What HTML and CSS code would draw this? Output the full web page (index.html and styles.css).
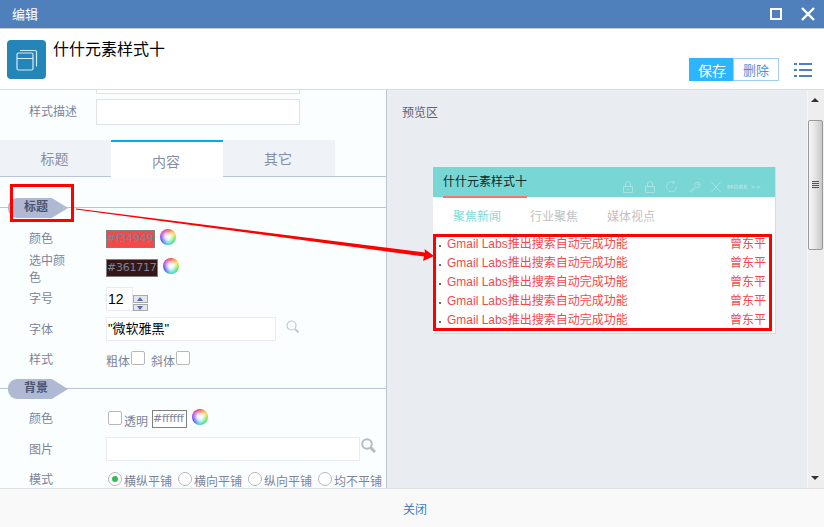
FILE: index.html
```html
<!DOCTYPE html>
<html lang="zh-CN">

<head>
	<meta charset="UTF-8">
	<title>编辑</title>
	<link rel="stylesheet" href="styles.css">
</head>

<body>
	<div class="titlebar">
		<span class="titlebar-text">编辑</span>
		<span class="win-max"></span>
		<svg class="win-close" width="14" height="14" viewBox="0 0 14 14"><path d="M1 1L13 13M13 1L1 13" stroke="#fff" stroke-width="2.4" fill="none"/></svg>
	</div>

	<div class="head">
		<div class="app-icon">
			<svg width="39" height="39" viewBox="0 0 39 39" fill="none" stroke="#d5ebf5" stroke-width="1.2">
				<rect x="10" y="13" width="16" height="17" rx="1.500"/>
				<path d="M10 18.500H26M13 10.500H28a1.500 1.500 0 0 1 1.500 1.500V26.500"/>
			</svg>
		</div>
		<div class="head-title">什什元素样式十</div>
		<div class="head-btns">
			<span class="btn-save">保存</span><span class="btn-del">删除</span>
		</div>
		<svg class="menu-icon" width="18" height="14" viewBox="0 0 18 14" fill="#4f80bb">
			<rect x="0" y="0" width="3" height="2"/><rect x="5" y="0" width="13" height="2"/>
			<rect x="0" y="6" width="3" height="2"/><rect x="5" y="6" width="13" height="2"/>
			<rect x="0" y="12" width="3" height="2"/><rect x="5" y="12" width="13" height="2"/>
		</svg>
	</div>

	<div class="main">
		<div class="left">
			<div class="cut-input"></div>
			<div class="row row-desc">
				<span class="label">样式描述</span>
				<span class="field field-desc"></span>
			</div>

			<div class="tabs">
				<span class="tab">标题</span>
				<span class="tab tab-on">内容</span>
				<span class="tab">其它</span>
			</div>

			<div class="section section-first"><span class="pill">标题</span></div>

			<div class="row row-color">
				<span class="label">颜色</span>
				<span class="swatch swatch-red">#f34949</span>
				<span class="ball"></span>
			</div>
			<div class="row row-color2">
				<span class="label label-wrap">选中颜色</span>
				<span class="swatch swatch-dark">#361717</span>
				<span class="ball"></span>
			</div>
			<div class="row row-size">
				<span class="label">字号</span>
				<span class="field field-size">12</span>
				<span class="spin"><i class="spin-up"></i><i class="spin-down"></i></span>
			</div>
			<div class="row row-font">
				<span class="label">字体</span>
				<span class="field field-font">"微软雅黑"</span>
				<svg class="mag" width="13" height="13" viewBox="0 0 13 13" fill="none" stroke="#c4c8cc"><circle cx="5.500" cy="5.500" r="4.500" stroke-width="1.200"/><path d="M9 9L12.500 12.500" stroke-width="2"/></svg>
			</div>
			<div class="row row-style">
				<span class="label">样式</span>
				<span class="opt">粗体</span><span class="check"></span>
				<span class="opt opt-gap">斜体</span><span class="check"></span>
			</div>

			<div class="section section-bg"><span class="pill">背景</span></div>

			<div class="row row-bg">
				<span class="label">颜色</span>
				<span class="check check-first"></span>
				<span class="opt opt-clear">透明</span>
				<span class="swatch swatch-white">#ffffff</span>
				<span class="ball"></span>
			</div>
			<div class="row row-pic">
				<span class="label">图片</span>
				<span class="field field-pic"></span>
				<svg class="mag-big" width="15" height="15" viewBox="0 0 15 15" fill="none" stroke="#b8bcbf"><circle cx="6" cy="6" r="4.800" stroke-width="2"/><path d="M9.500 9.500L14 14" stroke-width="3"/></svg>
			</div>
			<div class="row row-mode">
				<span class="label">模式</span>
				<span class="radio radio-on"></span><span class="opt">横纵平铺</span>
				<span class="radio"></span><span class="opt">横向平铺</span>
				<span class="radio"></span><span class="opt">纵向平铺</span>
				<span class="radio"></span><span class="opt">均不平铺</span>
			</div>
		</div>

		<div class="preview">
			<div class="preview-label">预览区</div>
			<div class="card">
				<div class="card-head">
					<span class="card-title">什什元素样式十</span>
					<svg class="card-tools" width="100" height="14" viewBox="0 0 100 14" fill="none" stroke="#a6e3e2">
						<path d="M1.500 6.500h9v6h-9zM3.500 6.500V4a2.500 2.500 0 0 1 5 0v2.500M5 9.500h2"/>
						<path d="M23.500 6.500h9v6h-9zM25.500 6.500V4a2.500 2.500 0 0 1 5 0v2.500"/>
						<path d="M52 2.500a5 5 0 1 0 2.500 4M51 0.500l1.500 2-2 1.500"/>
						<path d="M69 12.500l-1-1 5-5a3 3 0 0 1 4-4l-2 2 1 1 2-2a3 3 0 0 1-4 4z"/>
						<path d="M89 1.500l10 11M99 1.500l-10 11"/>
					</svg>
					<span class="card-more">MORE &gt;&gt;</span>
				</div>
				<div class="card-tabs">
					<span class="card-tab card-tab-on">聚焦新闻</span>
					<span class="card-tab">行业聚焦</span>
					<span class="card-tab">媒体视点</span>
				</div>
				<ul class="news">
					<li><span>Gmail Labs推出搜索自动完成功能</span><span>曾东平</span></li>
					<li><span>Gmail Labs推出搜索自动完成功能</span><span>曾东平</span></li>
					<li><span>Gmail Labs推出搜索自动完成功能</span><span>曾东平</span></li>
					<li><span>Gmail Labs推出搜索自动完成功能</span><span>曾东平</span></li>
					<li><span>Gmail Labs推出搜索自动完成功能</span><span>曾东平</span></li>
				</ul>
			</div>
		</div>

		<div class="scrollbar">
			<span class="arrow-up"></span>
			<div class="thumb"><span class="grip"></span></div>
			<span class="arrow-down"></span>
		</div>
	</div>

	<div class="foot">关闭</div>

	<!-- 红框和箭头是盖在截图上的标注 -->
	<div class="mark mark-title"></div>
	<div class="mark mark-list"></div>
	<svg class="mark-arrow" width="824" height="527" viewBox="0 0 824 527">
		<polygon points="76,208.500 425,252.500 424.500,249 434,256 423,261 424,256.500 76,209.500" fill="#f00"/>
	</svg>
</body>

</html>
```

FILE: styles.css
```css
* {
	margin: 0;
	padding: 0;
	box-sizing: border-box;
}
html, body {
	width: 824px;
	height: 527px;
	overflow: hidden;
}
body {
	position: relative;
	background: #fff;
	font-family: "Liberation Sans", "Noto Sans CJK SC", sans-serif;
	font-size: 12px;
	color: #7c8499;
}

/* 标题栏 */
.titlebar {
	display: flex;
	align-items: center;
	height: 29px;
	padding: 0 9px 1px 12px;
	background: #4f80bb;
	border-bottom: 1px solid #c9c9c9;
	color: #fff;
	font-size: 13px;
}
.titlebar-text {
	flex: 1;
}
.win-max {
	width: 12px;
	height: 12px;
	margin-right: 19px;
	border: 2px solid #fff;
}

/* 头部 */
.head {
	display: flex;
	height: 61px;
	padding: 11px 12px 0 7px;
	border-bottom: 1px solid #dcdcdc;
}
.app-icon {
	width: 39px;
	height: 39px;
	background: #2485b8;
	border-radius: 4px;
}
.head-title {
	flex: 1;
	margin: 0 0 0 7px;
	color: #000;
	font-size: 16px;
	line-height: 20px;
}
.head-btns {
	display: flex;
	height: 23px;
	margin-top: 18px;
}
.btn-save, .btn-del {
	display: flex;
	align-items: center;
	justify-content: center;
	height: 23px;
	font-size: 13px;
}
.btn-save {
	width: 44px;
	padding-left: 2px;
	background: #2eb5ff;
	color: #fff;
	font-size: 14px;
}
.btn-del {
	width: 46px;
	background: #fff;
	border: 1px solid #a3cdf5;
	color: #4f8fd0;
}
.menu-icon {
	margin: 23px 0 0 15px;
}

/* 主体 */
.main {
	display: flex;
	height: 398px;
	overflow: hidden;
	background: #e9edf1;
}
.left {
	width: 387px;
	flex: none;
	background: #fbfeff;
	border-right: 1px solid #bcc4d8;
	overflow: hidden;
}
.cut-input {
	width: 204px;
	height: 4px;
	margin-left: 96px;
	background: #fff;
	border: 1px solid #dfe2e6;
	border-top: 0;
}
.row {
	display: flex;
	align-items: center;
	padding-left: 29px;
}
.label {
	width: 77px;
	flex: none;
	line-height: 17px;
}
.label-wrap {
	padding: 3px 38px 0 0;
}
.row-font .label, .row-pic .label, .row-mode .label {
	padding-top: 2px;
}
.field {
	display: block;
	background: #fff;
	border: 1px solid #e9e9fa;
	color: #000;
	line-height: 22px;
}
.row-desc {
	height: 26px;
	margin-top: 5px;
}
.field-desc {
	width: 204px;
	height: 26px;
	margin-left: -10px;
	border: 1px solid #dfe2e6;
}

/* 选项卡 */
.tabs {
	display: flex;
	height: 37px;
	margin-top: 15px;
	border-bottom: 1px solid #bcc4d8;
}
.tab {
	width: 112px;
	height: 36px;
	padding: 4px 2px 0 0;
	background: #eff2f6;
	font-size: 14px;
	line-height: 30px;
	text-align: center;
	color: #868ea3;
}
.tab:first-child {
	width: 111px;
}
.tab-on {
	height: 37px;
	padding-top: 5px;
	background: #fff;
	border-top: 2px solid #00aaf0;
}

/* 分组标题 */
.section {
	height: 20px;
	background: linear-gradient(#bcc4d8, #bcc4d8) 0 9px / 100% 1px no-repeat;
}
.section-first {
	margin-top: 21px;
}
.section-bg {
	margin-top: 10px;
}
.pill {
	display: block;
	width: 60px;
	height: 20px;
	margin-left: 8px;
	padding-left: 16px;
	background: #b0b9d4;
	border-radius: 9px 0 0 9px;
	clip-path: polygon(0 0, 73% 0, 100% 50%, 73% 100%, 0 100%);
	color: #4a5474;
	font-size: 12px;
	font-weight: bold;
	line-height: 19px;
}

/* 颜色输入 */
.swatch {
	display: block;
	height: 18px;
	border: 1px solid #808080;
	font-family: "DejaVu Sans", sans-serif;
	font-size: 11px;
	letter-spacing: -.25px;
	line-height: 16px;
	white-space: nowrap;
	overflow: hidden;
}
.swatch-red {
	width: 49px;
	background: #f34949;
}
.swatch-dark {
	width: 52px;
	background: #361717;
}
.swatch-white {
	width: 35px;
	margin-left: 4px;
	background: #fff;
}
.ball {
	width: 16px;
	height: 16px;
	margin: -5px 0 0 5px;
	border-radius: 50%;
	background: radial-gradient(circle, #fff 0, rgba(255,255,255,.85) 25%, rgba(255,255,255,0) 70%),
		conic-gradient(#ff4040, #f0e040, #40e060, #40d0e0, #4050f0, #c040e0, #ff4040);
}
.row-color {
	height: 20px;
	margin-top: 11px;
}
.row-color2 {
	height: 36px;
	margin-top: 1px;
}
.row-size {
	height: 24px;
	margin-top: 1px;
}
.field-size {
	width: 27px;
	height: 24px;
	padding-left: 1px;
	font-size: 14px;
}
.spin {
	display: flex;
	flex-direction: column;
	gap: 1px;
	width: 15px;
	height: 16px;
	margin: 8px 0 0 0;
}
.spin i {
	display: block;
	height: 8px;
	background: #e4e6ea;
	border: 1px solid #a8a8a8;
	position: relative;
}
.spin i:after {
	content: "";
	position: absolute;
	left: 3px;
	border-left: 3px solid transparent;
	border-right: 3px solid transparent;
}
.spin-up:after {
	top: 1px;
	border-bottom: 4px solid #5a6ab0;
}
.spin-down:after {
	top: 1px;
	border-top: 4px solid #5a6ab0;
}
.row-font {
	height: 24px;
	margin-top: 6px;
}
.field-font {
	width: 170px;
	height: 24px;
	padding-left: 1px;
	font-size: 13px;
}
.mag {
	margin: -5px 0 0 10px;
}
.row-style {
	height: 22px;
	margin-top: 6px;
	padding-top: 4px;
}
.opt {
	white-space: nowrap;
}
.opt-gap {
	margin-left: 6px;
}
.row-style .check {
	margin-left: 1px;
}
.row-style .opt-gap + .check {
	margin-left: 1px;
}
.check {
	width: 14px;
	height: 14px;
	margin-top: -5px;
	background: #fff;
	border: 1px solid #b8b8b8;
	border-radius: 2px;
}
.row-bg {
	height: 20px;
	margin-top: 10px;
}
.check-first {
	margin: -3px 0 0 2px;
}
.opt-clear {
	margin-left: 2px;
	padding-top: 3px;
}
.row-pic {
	height: 24px;
	margin-top: 8px;
}
.field-pic {
	width: 254px;
	height: 24px;
}
.mag-big {
	margin: -8px 0 0 1px;
}
.row-mode {
	height: 22px;
	margin-top: 7px;
}
.radio {
	position: relative;
	width: 14px;
	height: 14px;
	margin: 0 2px 0 2px;
	background: #fff;
	border: 1px solid #b8b8b8;
	border-radius: 50%;
	flex: none;
}
.row-mode .opt {
	margin-top: 2px;
	margin-right: 4px;
}
.radio-on:after {
	content: "";
	position: absolute;
	left: 3px;
	top: 3px;
	width: 6px;
	height: 6px;
	border-radius: 50%;
	background: #33bb55;
}

/* 预览区 */
.preview {
	flex: 1;
	padding: 16px 0 0 15px;
}
.preview-label {
	height: 61px;
	line-height: 15px;
	color: #5d6270;
}
.card {
	width: 343px;
	height: 167px;
	margin-left: 31px;
	background: #fff;
	border-right: 1px solid #d8dcdc;
	border-bottom: 1px solid #d8dcdc;
}
.card-head {
	display: flex;
	height: 30px;
	padding-left: 10px;
	background: #78d6d5;
}
.card-title {
	width: 84px;
	height: 31px;
	color: #0c2a28;
	font-size: 12px;
	line-height: 30px;
	border-bottom: 2px solid #ff7070;
	white-space: nowrap;
}
.card-tools {
	margin: 13px 0 0 95px;
}
.card-more {
	margin: 14px 0 0 5px;
	color: #a6e3e2;
	font-family: "DejaVu Sans", sans-serif;
	font-size: 6px;
	font-weight: bold;
	letter-spacing: .3px;
	line-height: 12px;
	white-space: nowrap;
}
.card-tabs {
	display: flex;
	height: 37px;
	margin: 0 0 0 6px;
	gap: 29px;
	padding-left: 14px;
	line-height: 41px;
	color: #bfc2c5;
}
.card-tab-on {
	color: #7fdcd8;
}
.news {
	list-style: none;
	padding: 0 9px 0 14px;
	color: #f34949;
}
.news li {
	position: relative;
	display: flex;
	justify-content: space-between;
	height: 19px;
	line-height: 20px;
}
.news li:before {
	content: "";
	position: absolute;
	left: -8px;
	top: 11px;
	width: 2px;
	height: 2px;
	background: #666;
}

/* 滚动条 */
.scrollbar {
	display: flex;
	flex-direction: column;
	align-items: center;
	width: 17px;
	padding-right: 2px;
	background: #eeeeee;
	border-left: 1px solid #f6f6f6;
}
.arrow-up {
	margin-top: 8px;
	height: 0;
	border-left: 4px solid transparent;
	border-right: 4px solid transparent;
	border-bottom: 4px solid #333;
}
.thumb {
	display: flex;
	align-items: center;
	justify-content: center;
	width: 15px;
	height: 130px;
	margin-top: 18px;
	background: linear-gradient(90deg, #f4f4f4, #e8e8e8 40%, #c8c8c8);
	border: 1px solid #9a9a9a;
	border-radius: 2px;
}
.grip {
	width: 7px;
	height: 8px;
	background: repeating-linear-gradient(#555 0, #555 1px, #ddd 1px, #ddd 2px);
}
.arrow-down {
	margin-top: auto;
	margin-bottom: 8px;
	border-left: 4px solid transparent;
	border-right: 4px solid transparent;
	border-top: 4px solid #333;
}

/* 底部 */
.foot {
	height: 39px;
	padding-left: 6px;
	background: #faf9f9;
	border-top: 1px solid #dcdfe0;
	color: #3a7fc4;
	line-height: 42px;
	text-align: center;
}

/* 标注 */
.mark {
	position: absolute;
	border: 3px solid #f00;
}
.mark-title {
	left: 10px;
	top: 184px;
	width: 64px;
	height: 38px;
}
.mark-list {
	left: 433px;
	top: 234px;
	width: 339px;
	height: 97px;
}
.mark-arrow {
	position: absolute;
	left: 0;
	top: 0;
}
```
